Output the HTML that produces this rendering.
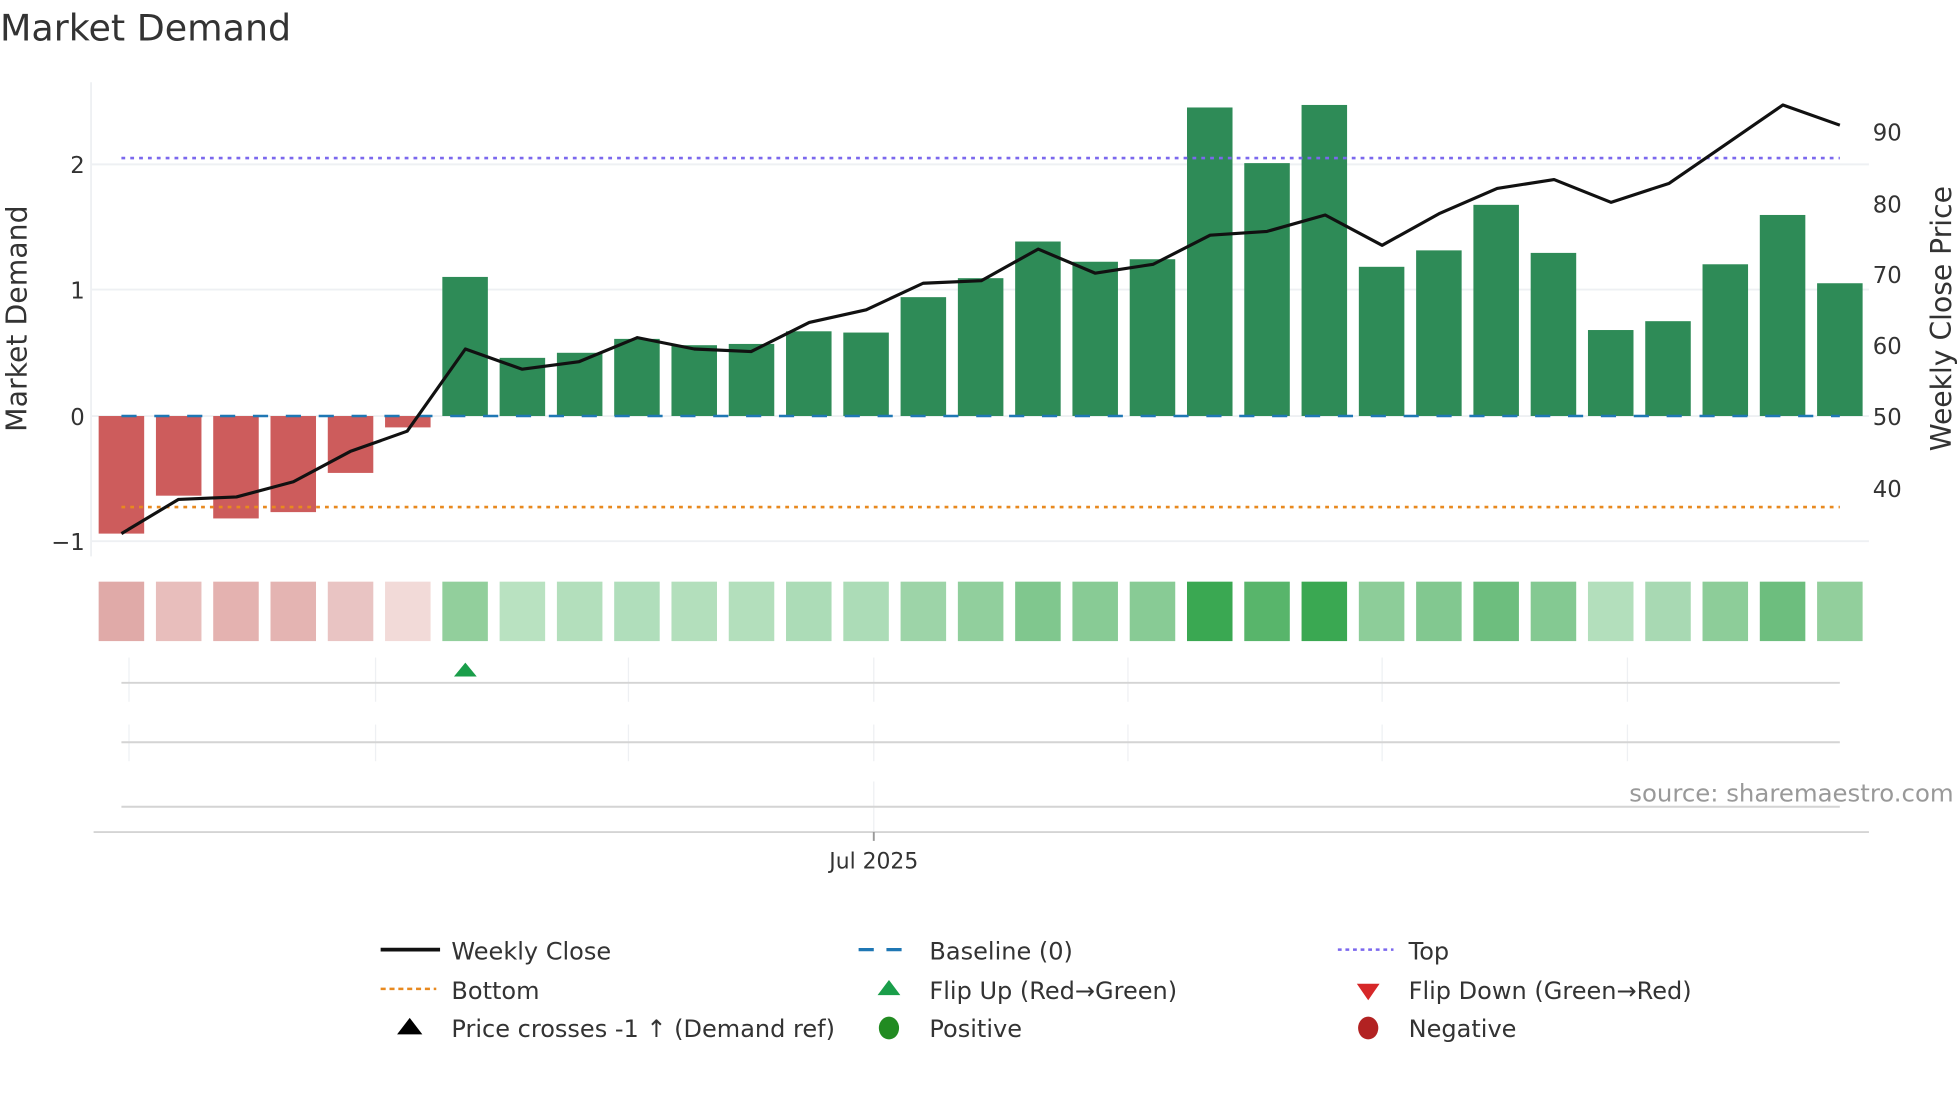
<!DOCTYPE html>
<html><head><meta charset="utf-8"><style>
html,body{margin:0;padding:0;background:#fff;}
svg{display:block;font-family:"DejaVu Sans","Liberation Sans",sans-serif;}
</style></head><body>
<svg width="1960" height="1102" viewBox="0 0 1550 871.5" xmlns="http://www.w3.org/2000/svg">
<rect width="1550" height="871.5" fill="#fff"/>
<text x="0" y="32" font-size="28.8" fill="#333">Market Demand</text>
<!-- grid -->
<g stroke="#eef0f3" stroke-width="1.5">
<line x1="72" y1="130" x2="1478" y2="130"/>
<line x1="72" y1="229" x2="1478" y2="229"/>
<line x1="72" y1="329" x2="1478" y2="329"/>
<line x1="72" y1="428" x2="1478" y2="428"/>
</g>
<line x1="72" y1="65" x2="72" y2="440" stroke="#eef0f3" stroke-width="1.5"/>
<g font-size="18" fill="#333" text-anchor="end">
<text x="67" y="137">2</text><text x="67" y="236">1</text><text x="67" y="336">0</text><text x="67" y="435">−1</text>
</g>
<g font-size="18" fill="#333">
<text x="1481" y="111">90</text><text x="1481" y="168">80</text><text x="1481" y="224">70</text><text x="1481" y="280">60</text><text x="1481" y="336">50</text><text x="1481" y="393">40</text>
</g>
<text transform="translate(21,252) rotate(-90)" font-size="22.4" fill="#333" text-anchor="middle">Market Demand</text>
<text transform="translate(1543,252) rotate(-90)" font-size="22.3" fill="#333" text-anchor="middle">Weekly Close Price</text>
<!-- bars -->
<g fill="#cd5c5c">
<rect x="78" y="329" width="36" height="93"/>
<rect x="123.3" y="329" width="36" height="63"/>
<rect x="168.6" y="329" width="36" height="81"/>
<rect x="213.9" y="329" width="36" height="76"/>
<rect x="259.2" y="329" width="36" height="45"/>
<rect x="304.5" y="329" width="36" height="9"/>
</g>
<g fill="#2e8b57">
<rect x="349.8" y="219" width="36" height="110"/>
<rect x="395.1" y="283" width="36" height="46"/>
<rect x="440.4" y="279" width="36" height="50"/>
<rect x="485.7" y="268" width="36" height="61"/>
<rect x="531" y="273" width="36" height="56"/>
<rect x="576.3" y="272" width="36" height="57"/>
<rect x="621.6" y="262" width="36" height="67"/>
<rect x="666.9" y="263" width="36" height="66"/>
<rect x="712.2" y="235" width="36" height="94"/>
<rect x="757.5" y="220" width="36" height="109"/>
<rect x="802.8" y="191" width="36" height="138"/>
<rect x="848.1" y="207" width="36" height="122"/>
<rect x="893.4" y="205" width="36" height="124"/>
<rect x="938.7" y="85" width="36" height="244"/>
<rect x="984" y="129" width="36" height="200"/>
<rect x="1029.3" y="83" width="36" height="246"/>
<rect x="1074.6" y="211" width="36" height="118"/>
<rect x="1119.9" y="198" width="36" height="131"/>
<rect x="1165.2" y="162" width="36" height="167"/>
<rect x="1210.5" y="200" width="36" height="129"/>
<rect x="1255.8" y="261" width="36" height="68"/>
<rect x="1301.1" y="254" width="36" height="75"/>
<rect x="1346.4" y="209" width="36" height="120"/>
<rect x="1391.7" y="170" width="36" height="159"/>
<rect x="1437" y="224" width="36" height="105"/>
</g>
<line x1="96" y1="329" x2="1455" y2="329" stroke="#1f77b4" stroke-width="2" stroke-dasharray="12,14"/>
<line x1="96" y1="125" x2="1455" y2="125" stroke="#7b68ee" stroke-width="2" stroke-dasharray="3,4"/>
<line x1="96" y1="401" x2="1455" y2="401" stroke="#e8891f" stroke-width="2" stroke-dasharray="3,4"/>
<polyline fill="none" stroke="#111" stroke-width="2.5" stroke-linejoin="round" points="96,422 141,395 187,393 232,381 277,357 322,341 368,276 413,292 458,286 504,267 549,276 594,278 640,255 685,245 730,224 776,222 821,197 866,216 912,209 957,186 1002,183 1048,170 1093,194 1138,169 1184,149 1229,142 1274,160 1320,145 1365,114 1410,83 1455,99"/>
<!-- heatmap -->
<g>
<rect x="78" y="460" width="36" height="47" fill="#e0aaa8"/>
<rect x="123.3" y="460" width="36" height="47" fill="#e8bebc"/>
<rect x="168.6" y="460" width="36" height="47" fill="#e4b2b0"/>
<rect x="213.9" y="460" width="36" height="47" fill="#e4b4b2"/>
<rect x="259.2" y="460" width="36" height="47" fill="#e9c4c3"/>
<rect x="304.5" y="460" width="36" height="47" fill="#f2dad8"/>
<rect x="349.8" y="460" width="36" height="47" fill="#92cf9c"/>
<rect x="395.1" y="460" width="36" height="47" fill="#b9e2c1"/>
<rect x="440.4" y="460" width="36" height="47" fill="#b3dfbc"/>
<rect x="485.7" y="460" width="36" height="47" fill="#b0debb"/>
<rect x="531" y="460" width="36" height="47" fill="#b3dfbc"/>
<rect x="576.3" y="460" width="36" height="47" fill="#b3dfbc"/>
<rect x="621.6" y="460" width="36" height="47" fill="#acdcb7"/>
<rect x="666.9" y="460" width="36" height="47" fill="#acdcb7"/>
<rect x="712.2" y="460" width="36" height="47" fill="#9dd4a8"/>
<rect x="757.5" y="460" width="36" height="47" fill="#91cf9d"/>
<rect x="802.8" y="460" width="36" height="47" fill="#80c78e"/>
<rect x="848.1" y="460" width="36" height="47" fill="#88cb95"/>
<rect x="893.4" y="460" width="36" height="47" fill="#88cb95"/>
<rect x="938.7" y="460" width="36" height="47" fill="#3aa852"/>
<rect x="984" y="460" width="36" height="47" fill="#58b56b"/>
<rect x="1029.3" y="460" width="36" height="47" fill="#3aa852"/>
<rect x="1074.6" y="460" width="36" height="47" fill="#8dcd99"/>
<rect x="1119.9" y="460" width="36" height="47" fill="#82c890"/>
<rect x="1165.2" y="460" width="36" height="47" fill="#6dbe7e"/>
<rect x="1210.5" y="460" width="36" height="47" fill="#84c992"/>
<rect x="1255.8" y="460" width="36" height="47" fill="#b3dfbc"/>
<rect x="1301.1" y="460" width="36" height="47" fill="#a8d9b3"/>
<rect x="1346.4" y="460" width="36" height="47" fill="#8dcd99"/>
<rect x="1391.7" y="460" width="36" height="47" fill="#6dbe7e"/>
<rect x="1437" y="460" width="36" height="47" fill="#92cf9c"/>
</g>
<!-- lower panels -->
<g stroke="#eef0f3" stroke-width="1">
<line x1="102" y1="520" x2="102" y2="555"/><line x1="297" y1="520" x2="297" y2="555"/><line x1="497" y1="520" x2="497" y2="555"/><line x1="691" y1="520" x2="691" y2="555"/><line x1="892" y1="520" x2="892" y2="555"/><line x1="1093" y1="520" x2="1093" y2="555"/><line x1="1287" y1="520" x2="1287" y2="555"/>
<line x1="102" y1="573" x2="102" y2="602"/><line x1="297" y1="573" x2="297" y2="602"/><line x1="497" y1="573" x2="497" y2="602"/><line x1="691" y1="573" x2="691" y2="602"/><line x1="892" y1="573" x2="892" y2="602"/><line x1="1093" y1="573" x2="1093" y2="602"/><line x1="1287" y1="573" x2="1287" y2="602"/>
<line x1="691" y1="618" x2="691" y2="658"/>
</g>
<g stroke="#d4d4d4" stroke-width="1.5">
<line x1="96" y1="540" x2="1455" y2="540"/>
<line x1="96" y1="587" x2="1455" y2="587"/>
<line x1="96" y1="638" x2="1455" y2="638"/>
<line x1="74" y1="658" x2="1478" y2="658"/>
<line x1="691" y1="658" x2="691" y2="665" stroke="#999"/>
</g>
<polygon points="368,524 377,535 359,535" fill="#1a9e4a"/>
<text x="691" y="687" font-size="17.3" fill="#333" text-anchor="middle">Jul 2025</text>
<text x="1545" y="634" font-size="19.3" fill="#999" text-anchor="end">source: sharemaestro.com</text>
<!-- legend -->
<g font-size="19" fill="#333">
<line x1="301" y1="751" x2="348" y2="751" stroke="#111" stroke-width="3"/>
<text x="357" y="759">Weekly Close</text>
<line x1="679" y1="751" x2="722" y2="751" stroke="#1f77b4" stroke-width="2.5" stroke-dasharray="12,10"/>
<text x="735" y="759">Baseline (0)</text>
<line x1="1058" y1="751" x2="1102" y2="751" stroke="#7b68ee" stroke-width="2" stroke-dasharray="3,3"/>
<text x="1114" y="759">Top</text>
<line x1="301" y1="782" x2="345" y2="782" stroke="#e8891f" stroke-width="2" stroke-dasharray="4,3"/>
<text x="357" y="790">Bottom</text>
<polygon points="703,775 712,787 694,787" fill="#1a9e4a"/>
<text x="735" y="790">Flip Up (Red→Green)</text>
<polygon points="1073,778 1091,778 1082,791" fill="#d62728"/>
<text x="1114" y="790">Flip Down (Green→Red)</text>
<polygon points="324,805 334,818 314,818" fill="#000"/>
<text x="357" y="820">Price crosses -1 ↑ (Demand ref)</text>
<ellipse cx="703" cy="813" rx="8" ry="9" fill="#228b22"/>
<text x="735" y="820">Positive</text>
<ellipse cx="1082" cy="813" rx="8" ry="9" fill="#b22222"/>
<text x="1114" y="820">Negative</text>
</g>
</svg>
</body></html>
